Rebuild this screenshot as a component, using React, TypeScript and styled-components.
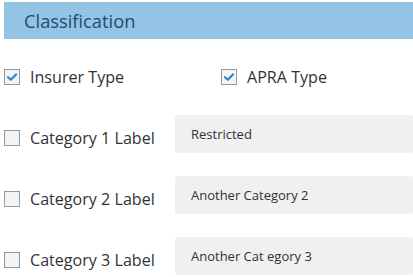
import React, { useState } from 'react';
import styled, { createGlobalStyle } from 'styled-components';

const GlobalStyle = createGlobalStyle`
    html, body {
        margin: 0;
        padding: 0;
        background: #ffffff;
    }
    body {
        font-family: 'Open Sans', 'Noto Sans', sans-serif;
    }
`;

const categories = [
    { label: 'Category 1 Label', value: 'Restricted' },
    { label: 'Category 2 Label', value: 'Another Category 2' },
    { label: 'Category 3 Label', value: 'Another Cat egory 3' }
];

function CheckBox({ checked, onToggle }) {
    return (
        <Box onClick={onToggle}>
            {checked && (
                <svg width="10" height="8" viewBox="0 0 10 8">
                    <path d="M1 4.2 L3.8 6.8 L9 1.4" fill="none" stroke="#2a86d1" strokeWidth="2.2" strokeLinecap="round" strokeLinejoin="round" />
                </svg>
            )}
        </Box>
    );
}

export default function App() {
    const [insurer, setInsurer] = useState(true);
    const [apra, setApra] = useState(true);
    const [cats, setCats] = useState([false, false, false]);

    return (
        <Page>
            <GlobalStyle />
            <Header>Classification</Header>
            <TopRow>
                <Option width={217}>
                    <CheckBox checked={insurer} onToggle={() => setInsurer(!insurer)} />
                    <Label>Insurer Type</Label>
                </Option>
                <Option>
                    <CheckBox checked={apra} onToggle={() => setApra(!apra)} />
                    <Label>APRA Type</Label>
                </Option>
            </TopRow>
            {categories.map((c, i) => (
                <CategoryRow key={c.label}>
                    <CategoryLabel>
                        <CheckBox
                            checked={cats[i]}
                            onToggle={() => setCats(cats.map((v, j) => (j === i ? !v : v)))}
                        />
                        <Label>{c.label}</Label>
                    </CategoryLabel>
                    <TextInput defaultValue={c.value} />
                </CategoryRow>
            ))}
        </Page>
    );
}

const Page = styled.div`
    padding: 2px 0 0 4px;
    height: 275px;
    overflow: hidden;
`;

const Header = styled.div`
    display: flex;
    align-items: center;
    height: 37px;
    padding-left: 20px;
    background-color: #93c4e6;
    color: #254a6e;
    font-size: 18.3px;
`;

const TopRow = styled.div`
    display: flex;
    flex-direction: row;
    align-items: center;
    height: 32px;
    margin-top: 22px;
    margin-bottom: 22px;
`;

const Option = styled.div<{ width?: number }>`
    display: flex;
    align-items: center;
    width: ${(props) => (props.width ? props.width + 'px' : 'auto')};
`;

const Box = styled.span`
    display: flex;
    align-items: center;
    justify-content: center;
    box-sizing: border-box;
    width: 16px;
    height: 16px;
    border: 1px solid #999999;
    background-color: #f4f4f4;
    margin-right: 10px;
    cursor: pointer;
`;

const Label = styled.span`
    font-size: 16.1px;
    line-height: 22px;
    color: #2e3338;
`;

const CategoryRow = styled.div`
    display: flex;
    flex-direction: row;
    height: 38px;
    margin-bottom: 23px;
`;

const CategoryLabel = styled.div`
    display: flex;
    align-items: center;
    box-sizing: border-box;
    width: 171px;
    height: 38px;
    padding-top: 8px;
`;

const TextInput = styled.input`
    flex: 1;
    box-sizing: border-box;
    height: 38px;
    border: none;
    border-radius: 2px;
    background-color: #f0f0f0;
    padding: 0 0 0 16px;
    font-family: 'Open Sans', 'Noto Sans', sans-serif;
    font-size: 13px;
    color: #2e3338;
    outline: none;
`;
